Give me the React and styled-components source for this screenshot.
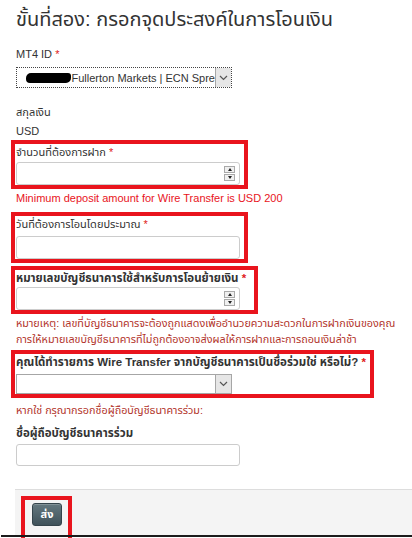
import styled, { createGlobalStyle } from "styled-components";

const GlobalStyle = createGlobalStyle`
  html, body {
    margin: 0;
    padding: 0;
    background: #fff;
  }
  body {
    font-family: "Liberation Sans", "Noto Sans Thai", "Noto Sans", sans-serif;
    font-size: 11px;
    color: #333;
  }
`;

const Page = styled.div`
  width: 412px;
  height: 538px;
  overflow: hidden;
  display: flex;
  flex-direction: column;
`;

const Content = styled.div`
  padding: 6px 0 0 16px;
  display: flex;
  flex-direction: column;
  align-items: flex-start;
`;

const Title = styled.h2`
  margin: 0 0 15px;
  font-size: 20px;
  font-weight: normal;
  color: #333;
  line-height: 26px;
`;

const Label = styled.div`
  font-size: ${(p) => (p.$bold ? "11.5px" : "11px")};
  line-height: 14px;
  color: #333;
  font-weight: ${(p) => (p.$bold ? "bold" : "normal")};
  margin: ${(p) => p.$margin || "0"};
`;

const Star = styled.span`
  color: #e02020;
`;

const Value = styled.div`
  font-size: 11px;
  line-height: 14px;
  margin: ${(p) => p.$margin || "0"};
`;

const Highlight = styled.div`
  border: 4px solid #e9141d;
  padding: 1px ${(p) => p.$padRight || 4}px 0 1px;
  margin: ${(p) => p.$margin || "0"};
  margin-left: -5px;
  width: fit-content;
  display: flex;
  flex-direction: column;
  gap: ${(p) => p.$gap || 3}px;
`;

const InputBox = styled.div`
  width: 224px;
  height: ${(p) => p.$h || 23}px;
  box-sizing: border-box;
  border: 1px solid #ccc;
  border-radius: 3px;
  background: #fff;
  display: flex;
  align-items: center;
  justify-content: flex-end;
  padding-right: 4px;
`;

const Spinner = styled.div`
  width: 11px;
  height: 15px;
  display: flex;
  flex-direction: column;
  gap: 1px;
`;

const SpinBtn = styled.div`
  flex: 1;
  background: #f0f0f0;
  border: 1px solid #a9a9a9;
  display: flex;
  align-items: center;
  justify-content: center;
  &::after {
    content: "";
    border-left: 2.5px solid transparent;
    border-right: 2.5px solid transparent;
    ${(p) =>
      p.$down
        ? "border-top: 3px solid #222;"
        : "border-bottom: 3px solid #222;"}
  }
`;

const SelectBox = styled.div`
  width: 216px;
  height: ${(p) => p.$h || 21}px;
  box-sizing: border-box;
  border: 1px ${(p) => (p.$focus ? "dotted #444" : "solid #a6a6a6")};
  background: #fff;
  display: flex;
  align-items: stretch;
  font-size: 11px;
  color: #333;
`;

const SelectText = styled.div`
  flex: 1;
  display: flex;
  align-items: center;
  padding-left: 2px;
  white-space: nowrap;
  overflow: hidden;
`;

const Redact = styled.span`
  display: inline-block;
  width: 48px;
  height: 10px;
  background: #000;
  border-radius: 5px 3px 5px 4px;
  margin: 0 1px 0 7px;
`;

const Arrow = styled.div`
  width: 15px;
  background: #e6e6e6;
  border-left: 1px solid #a6a6a6;
  display: flex;
  align-items: center;
  justify-content: center;
`;

const Error = styled.div`
  color: #e8141c;
  font-size: 11px;
  line-height: 14px;
  margin: 2px 0 7px;
`;

const Note = styled.div`
  color: #b2342b;
  font-size: 10.8px;
  line-height: 16px;
  margin: ${(p) => p.$margin || "0"};
`;

const Footer = styled.div`
  margin: 23px 0 0 15px;
  background: #f4f4f4;
  border-top: 1px solid #ddd;
  height: 45px;
  display: flex;
  align-items: flex-start;
  padding-left: 6px;
`;

const ButtonFrame = styled.div`
  border: 4px solid #e9141d;
  border-bottom: none;
  margin-top: 6px;
  padding: 3px 6px 15px 7px;
`;

const SubmitButton = styled.button`
  width: 30px;
  height: 23px;
  border: 1px solid #34444b;
  border-radius: 3px;
  background: linear-gradient(#64787f, #3f525a);
  color: #fff;
  font-family: inherit;
  font-size: 11px;
  font-weight: bold;
  padding: 0;
  box-shadow: inset 0 1px 0 rgba(255, 255, 255, 0.2);
`;

const BottomLine = styled.div`
  height: 2px;
  background: #1b1b1b;
  margin-left: 1px;
`;

function Chevron() {
  return (
    <svg width="9" height="6" viewBox="0 0 9 6">
      <path d="M1 1 L4.5 4.5 L8 1" fill="none" stroke="#555" strokeWidth="1.2" />
    </svg>
  );
}

function NumberInput() {
  return (
    <InputBox>
      <Spinner>
        <SpinBtn />
        <SpinBtn $down />
      </Spinner>
    </InputBox>
  );
}

export default function App() {
  return (
    <Page>
      <GlobalStyle />
      <Content>
        <Title>ขั้นที่สอง: กรอกจุดประสงค์ในการโอนเงิน</Title>
        <Label $margin="0 0 6px">
          MT4 ID <Star>*</Star>
        </Label>
        <SelectBox $focus>
          <SelectText>
            <Redact />
            Fullerton Markets | ECN Spre
          </SelectText>
          <Arrow>
            <Chevron />
          </Arrow>
        </SelectBox>
        <Value $margin="17px 0 0">สกุลเงิน</Value>
        <Value $margin="5px 0 0">USD</Value>

        <Highlight $margin="2px 0 0">
          <Label>
            จำนวนที่ต้องการฝาก <Star>*</Star>
          </Label>
          <NumberInput />
        </Highlight>
        <Error>Minimum deposit amount for Wire Transfer is USD 200</Error>

        <Highlight $gap={5}>
          <Label>
            วันที่ต้องการโอนโดยประมาณ <Star>*</Star>
          </Label>
          <InputBox />
        </Highlight>

        <Highlight $margin="3px 0 0" $gap={2} $padRight={8}>
          <Label $bold>
            หมายเลขบัญชีธนาคารใช้สำหรับการโอนย้ายเงิน <Star>*</Star>
          </Label>
          <NumberInput />
        </Highlight>

        <Note $margin="1px 0 0">
          หมายเหตุ: เลขที่บัญชีธนาคารจะต้องถูกแสดงเพื่ออำนวยความสะดวกในการฝากเงินของคุณ
          <br />
          การให้หมายเลขบัญชีธนาคารที่ไม่ถูกต้องอาจส่งผลให้การฝากและการถอนเงินล่าช้า
        </Note>

        <Highlight $margin="3px 0 0" $gap={5}>
          <Label $bold>
            คุณได้ทำรายการ Wire Transfer จากบัญชีธนาคารเป็นชื่อร่วมใช่ หรือไม่? <Star>*</Star>
          </Label>
          <SelectBox $h={20}>
            <SelectText />
            <Arrow>
              <Chevron />
            </Arrow>
          </SelectBox>
        </Highlight>

        <Note $margin="4px 0 0">หากใช่ กรุณากรอกชื่อผู้ถือบัญชีธนาคารร่วม:</Note>
        <Label $bold $margin="8px 0 4px">
          ชื่อผู้ถือบัญชีธนาคารร่วม
        </Label>
        <InputBox $h={22} />
      </Content>
      <Footer>
        <ButtonFrame>
          <SubmitButton>ส่ง</SubmitButton>
        </ButtonFrame>
      </Footer>
      <BottomLine />
    </Page>
  );
}
